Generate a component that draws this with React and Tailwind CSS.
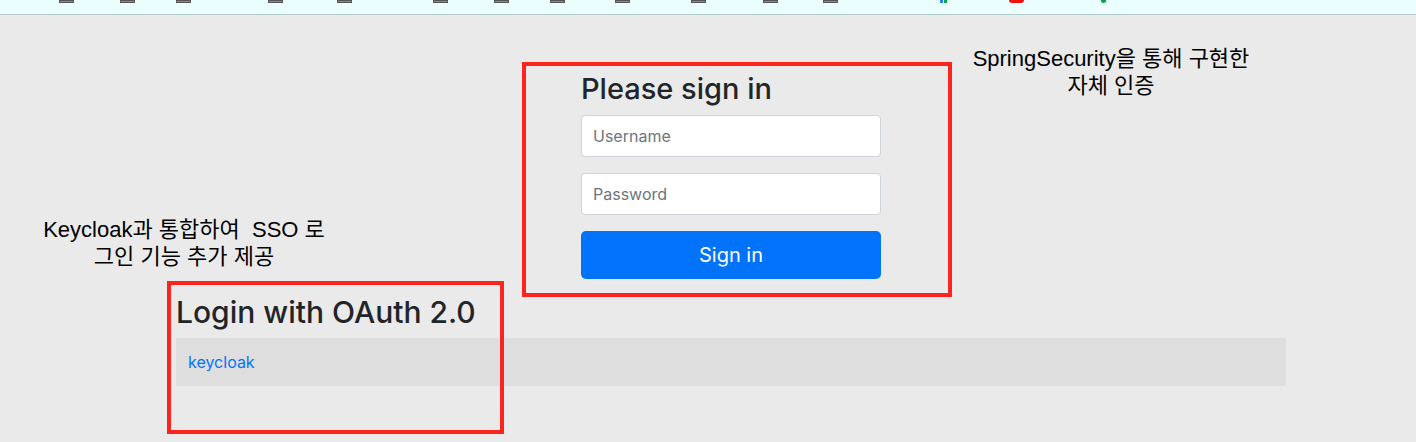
import React from 'react';

// tops of the cut-off bookmark bar glyphs (gap before each, width)
const stripMarks = [
  { gap: 59, w: 15, c: 'bg-[#8a8a8a] border border-[#555]' },
  { gap: 46, w: 15, c: 'bg-[#8a8a8a] border border-[#555]' },
  { gap: 41, w: 15, c: 'bg-[#8a8a8a] border border-[#555]' },
  { gap: 77, w: 15, c: 'bg-[#8a8a8a] border border-[#555]' },
  { gap: 54, w: 15, c: 'bg-[#8a8a8a] border border-[#555]' },
  { gap: 81, w: 15, c: 'bg-[#8a8a8a] border border-[#555]' },
  { gap: 46, w: 15, c: 'bg-[#8a8a8a] border border-[#555]' },
  { gap: 41, w: 15, c: 'bg-[#8a8a8a] border border-[#555]' },
  { gap: 50, w: 15, c: 'bg-[#8a8a8a] border border-[#555]' },
  { gap: 61, w: 15, c: 'bg-[#8a8a8a] border border-[#555]' },
  { gap: 57, w: 15, c: 'bg-[#8a8a8a] border border-[#555]' },
  { gap: 45, w: 15, c: 'bg-[#8a8a8a] border border-[#555]' },
  { gap: 102, w: 3, c: 'bg-blue-500' },
  { gap: 1, w: 3, c: 'bg-green-600' },
  { gap: 62, w: 15, c: 'bg-[#f31010] rounded-b-sm' },
  { gap: 77, w: 5, c: 'bg-green-600 rounded-b-full' },
];

const TopStrip = () => (
  <div className="flex items-start h-[15px] bg-[#eafefe] border-b border-[#b3cbcb]">
    {stripMarks.map((m, i) => (
      <span key={i} className={`h-[3px] shrink-0 ${m.c}`} style={{ marginLeft: m.gap, width: m.w }} />
    ))}
  </div>
);

const SignInForm = () => (
  <form className="w-[300px] ml-[581px] pt-[57px] flex flex-col">
    <h2 className="text-[29px] leading-[1.2] font-medium text-[#212529] mb-[8px]">Please sign in</h2>
    <div className="flex flex-col gap-[16px]">
      <input
        type="text"
        placeholder="Username"
        className="block w-full h-[42px] px-[11px] text-base bg-white border border-[#ced4da] rounded-[4px] placeholder:text-[#6c757d] outline-none"
      />
      <input
        type="password"
        placeholder="Password"
        className="block w-full h-[42px] px-[11px] text-base bg-white border border-[#ced4da] rounded-[4px] placeholder:text-[#6c757d] outline-none"
      />
      <button
        type="button"
        className="block w-full h-[48px] bg-[#0073fa] text-white text-[20px] rounded-[5px]"
      >
        Sign in
      </button>
    </div>
  </form>
);

const OAuthList = () => (
  <div className="ml-[176px] w-[1110px] mt-[16px]">
    <h2 className="text-[30px] leading-[1.17] font-medium text-[#212529] mb-[8px]">Login with OAuth 2.0</h2>
    <table className="w-full">
      <tbody>
        <tr className="bg-[#dedede]">
          <td className="h-[48px] px-[12px]">
            <a href="#" className="text-[#0073fa] text-base">keycloak</a>
          </td>
        </tr>
      </tbody>
    </table>
  </div>
);

const App = () => {
  return (
    <div className="w-[1416px] h-[442px] overflow-hidden bg-[#eaeaea] font-['Inter',sans-serif]">
      <TopStrip />
      <div className="relative">
        <SignInForm />
        <OAuthList />

        {/* annotation layer drawn over the page */}
        <div className="absolute left-[522px] top-[47px] w-[430px] h-[235px] border-4 border-[#fd2420]" />
        <div className="absolute left-[167px] top-[266px] w-[337px] h-[153px] border-4 border-[#fd2420]" />
        <p className="absolute left-[931px] top-[30px] w-[360px] text-center text-[22px] leading-[27px] text-black font-['Liberation_Sans','Noto_Sans_CJK_KR',sans-serif]">
          SpringSecurity을 통해 구현한<br />자체 인증
        </p>
        <p className="absolute left-[4px] top-[201px] w-[360px] text-center text-[22px] leading-[27px] text-black font-['Liberation_Sans','Noto_Sans_CJK_KR',sans-serif]">
          Keycloak과 통합하여&nbsp; SSO 로<br />그인 기능 추가 제공
        </p>
      </div>
    </div>
  );
};

export default App;
